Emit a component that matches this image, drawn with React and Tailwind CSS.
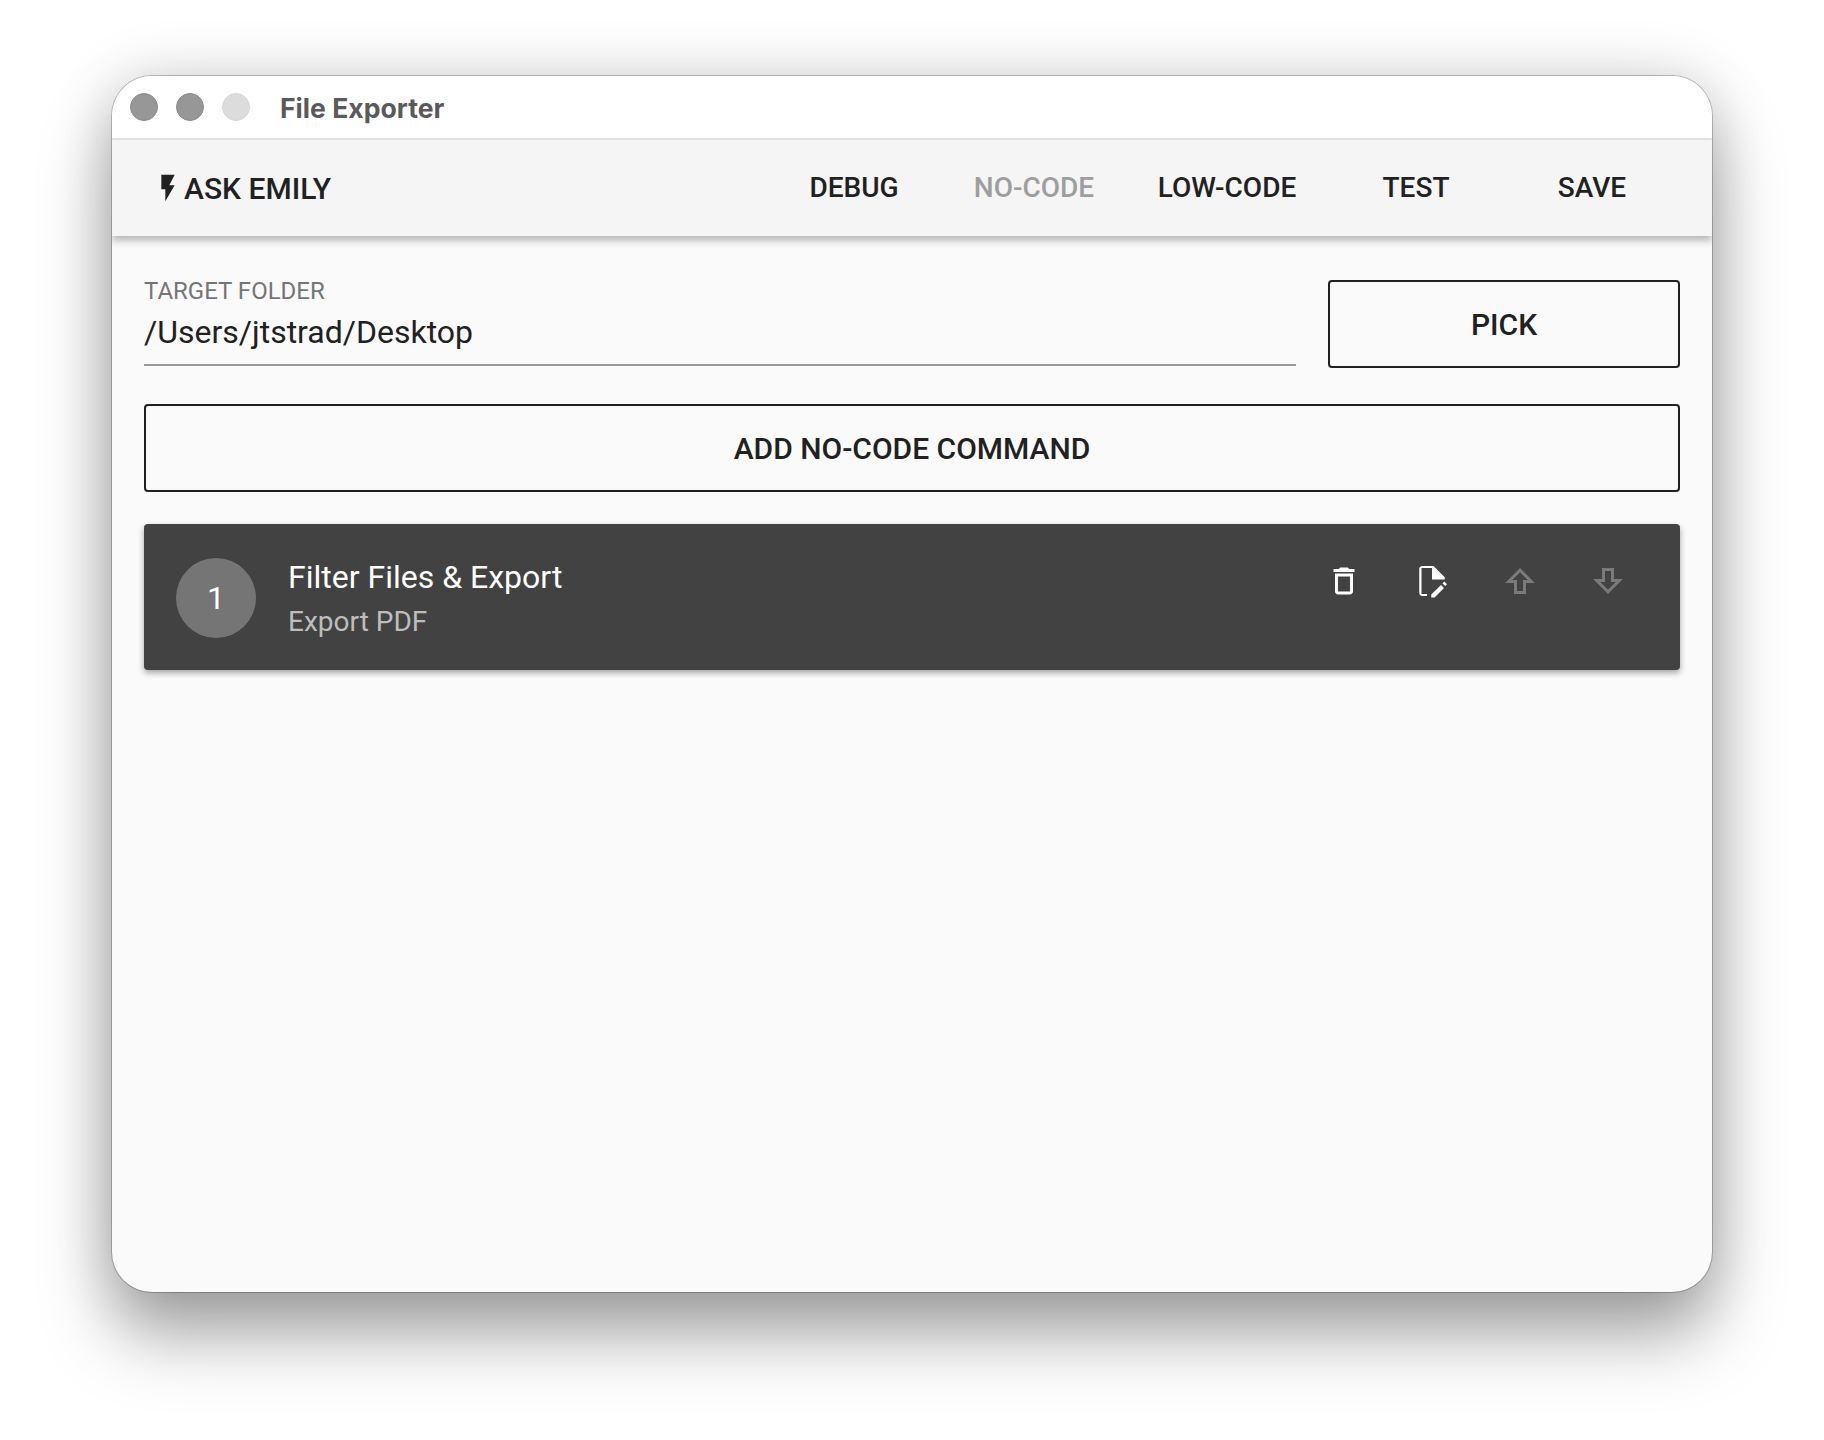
import React from 'react';

const NAV = [
  { label: 'DEBUG', width: 'w-[176px]', color: 'text-[#212121]' },
  { label: 'NO-CODE', width: 'w-[184px]', color: 'text-[#9e9e9e]' },
  { label: 'LOW-CODE', width: 'w-[202px]', color: 'text-[#212121]' },
  { label: 'TEST', width: 'w-[176px]', color: 'text-[#212121]' },
  { label: 'SAVE', width: 'w-[176px]', color: 'text-[#212121]' },
];

function Bolt() {
  return (
    <svg viewBox="0 0 24 24" className="w-8 h-8 fill-[#212121] -mx-[9px]">
      <path d="M7 2v11h3v9l7-12h-4l4-8z" />
    </svg>
  );
}

function TrashIcon() {
  return (
    <svg viewBox="0 0 24 24" className="w-9 h-9 fill-white">
      <path d="M6 19c0 1.1.9 2 2 2h8c1.1 0 2-.9 2-2V7H6v12zM8 9h8v10H8V9zm7.5-5l-1-1h-5l-1 1H5v2h14V4h-3.5z" />
    </svg>
  );
}

function FileEditIcon() {
  return (
    <svg viewBox="0 0 24 24" className="w-9 h-9 fill-white">
      <path d="M5.500 2H13l7.500 7.500V11H12V3.300H5V20.700h3.700V22H5.500c-1.100 0-2-.9-2-2V4c0-1.100.9-2 2-2z" />
      <path d="M11.500 23v-2l6.500-6.300 2 2L13.700 23zM19 13.600l1.200-1.200 1.800 1.800-1.200 1.200z" />
    </svg>
  );
}

function ArrowIcon({ down }) {
  return (
    <svg viewBox="0 0 24 24" className="w-9 h-9 fill-none stroke-[#7a7a7a] stroke-2">
      <path d={down ? 'M9 4.300h6v7.400h4.500L12 19.200 4.500 11.700H9z' : 'M9 19.700h6v-7.400h4.500L12 4.800 4.500 12.300H9z'} />
    </svg>
  );
}

function IconButton({ children }) {
  return <div className="w-[88px] flex justify-center">{children}</div>;
}

export default function App() {
  return (
    <div className="w-[1824px] h-[1440px] bg-white pt-[76px] pl-[112px] font-['Roboto',sans-serif]">
      <div className="w-[1600px] h-[1216px] rounded-[40px] overflow-hidden bg-[#fafafa] flex flex-col shadow-[0_0_0_1px_rgba(0,0,0,0.22),0_44px_70px_rgba(0,0,0,0.34),0_0_60px_rgba(0,0,0,0.16)]">
        {/* Title bar */}
        <div className="h-[64px] shrink-0 bg-white border-b-2 border-[#e8e8e8] flex items-center pl-[18px]">
          <div className="flex gap-[18px]">
            <div className="w-7 h-7 rounded-full bg-[#979797] border border-[#8a8a8a]" />
            <div className="w-7 h-7 rounded-full bg-[#979797] border border-[#8a8a8a]" />
            <div className="w-7 h-7 rounded-full bg-[#dcdcdc] border border-[#d4d4d4]" />
          </div>
          <span className="ml-[30px] mt-[4px] text-[26.6px] font-bold text-[#5a5a5a] font-['Inter',sans-serif]">File Exporter</span>
        </div>

        {/* Toolbar */}
        <div className="h-[96px] shrink-0 bg-[#f5f5f5] flex items-center justify-between pr-8 relative z-10 shadow-[0_4px_8px_rgba(0,0,0,0.3)]">
          <div className="flex items-center pl-[49px] text-[#212121] text-[30px] font-medium">
            <Bolt />
            <span className="ml-[9px]">ASK EMILY</span>
          </div>
          <div className="flex items-center text-[28px] font-medium">
            {NAV.map((item) => (
              <div key={item.label} className={`${item.width} text-center ${item.color}`}>{item.label}</div>
            ))}
          </div>
        </div>

        {/* Content */}
        <div className="flex-1 px-8 pt-[44px]">
          <div className="flex gap-8">
            <div className="flex-1 h-[86px] border-b-2 border-[#9a9a9a]">
              <div className="-mt-[3px] text-[24px] leading-[28px] text-[#757575]">TARGET FOLDER</div>
              <div className="text-[32px] leading-[44px] mt-[5px] text-[#212121]">/Users/jtstrad/Desktop</div>
            </div>
            <div className="w-[352px] h-[88px] border-2 border-[#212121] rounded-[4px] flex items-center justify-center text-[30px] font-medium text-[#212121]">
              PICK
            </div>
          </div>

          <div className="mt-[36px] h-[88px] border-2 border-[#212121] rounded-[4px] flex items-center justify-center text-[30px] font-medium text-[#212121]">
            ADD NO-CODE COMMAND
          </div>

          <div className="mt-8 h-[146px] bg-[#424242] rounded-[4px] flex items-center pl-8 pr-[28px] shadow-[0_3px_6px_rgba(0,0,0,0.35)]">
            <div className="mt-[2px] w-20 h-20 rounded-full bg-[#757575] flex items-center justify-center text-[32px] text-white">1</div>
            <div className="ml-8 flex-1 pt-[3px]">
              <div className="text-[32px] leading-[44px] text-white">Filter Files &amp; Export</div>
              <div className="mt-[3px] text-[28px] leading-[40px] text-[#bdbdbd]">Export PDF</div>
            </div>
            <div className="flex items-center mb-8">
              <IconButton><TrashIcon /></IconButton>
              <IconButton><FileEditIcon /></IconButton>
              <IconButton><ArrowIcon /></IconButton>
              <IconButton><ArrowIcon down /></IconButton>
            </div>
          </div>
        </div>
      </div>
    </div>
  );
}
